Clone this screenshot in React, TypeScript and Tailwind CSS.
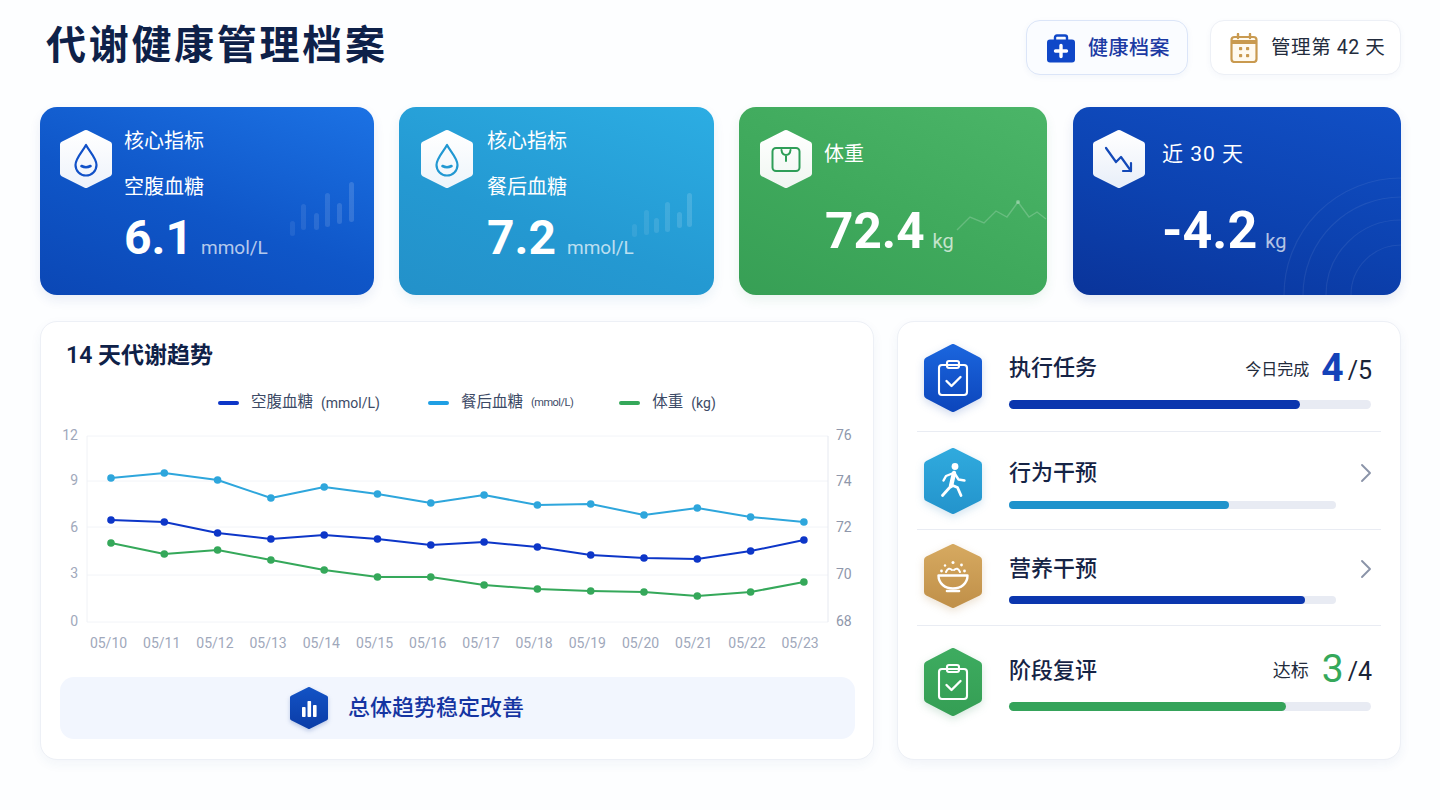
import React from "react";
import { ChevronRight } from "lucide-react";

const Hex = ({ id, from, to, w = 52, h = 58, r = 3, className = "", children }: { id: string; from: string; to: string; w?: number; h?: number; r?: number; className?: string; children?: React.ReactNode }) => {
  const top = h * 0.25;
  const pts = `${w / 2},${r} ${w - r},${top} ${w - r},${h - top} ${w / 2},${h - r} ${r},${h - top} ${r},${top}`;
  return (
    <svg width={w} height={h} viewBox={`0 0 ${w} ${h}`} className={`shrink-0 overflow-visible ${className}`}>
      <defs>
        <linearGradient id={id} x1="0" y1="0" x2="0" y2="1">
          <stop offset="0" stopColor={from} />
          <stop offset="1" stopColor={to} />
        </linearGradient>
      </defs>
      <polygon points={pts} fill={`url(#${id})`} stroke={`url(#${id})`} strokeWidth={r * 2} strokeLinejoin="round" />
      {children}
    </svg>
  );
};

const Drop = ({ color }: { color: string }) => (
  <g fill="none" stroke={color} strokeWidth="2.2" strokeLinecap="round" strokeLinejoin="round">
    <path d="M26 15 C23 21 15.5 28 15.5 35 a10.5 10.5 0 0 0 21 0 C36.5 28 29 21 26 15 Z" />
    <path d="M21.5 36 q4.5 2.4 9 0" strokeWidth="2.6" />
  </g>
);

const Bars = ({ items }: { items: number[][] }) => (
  <svg className="absolute inset-0 h-full w-full" fill="none">
    {items.map(([x, a, b], i) => (
      <rect key={i} x={x} y={a} width="5" height={b - a} rx="2.5" fill="#ffffff" fillOpacity={0.08 + i * 0.012} />
    ))}
  </svg>
);

const xs = Array.from({ length: 14 }, (_, i) => 110 + i * 53.3);
const series = [
  { color: "#2ea6dc", ys: [478, 473, 480, 498, 487, 494, 503, 495, 505, 504, 515, 508, 517, 522] },
  { color: "#0d36c8", ys: [520, 522, 533, 539, 535, 539, 545, 542, 547, 555, 558, 559, 551, 540] },
  { color: "#35a85a", ys: [543, 554, 550, 560, 570, 577, 577, 585, 589, 591, 592, 596, 592, 582] },
];
const dates = ["05/10", "05/11", "05/12", "05/13", "05/14", "05/15", "05/16", "05/17", "05/18", "05/19", "05/20", "05/21", "05/22", "05/23"];
const grid = [436, 481, 527, 575, 622];

const Chart = () => (
  <svg width="832" height="236" viewBox="40 420 832 236" className="block">
    {grid.map((y) => (
      <line key={y} x1="86" x2="827" y1={y} y2={y} stroke="#f2f4f8" strokeWidth="1" />
    ))}
    <line x1="86" x2="86" y1="436" y2="622" stroke="#f0f2f6" />
    <line x1="827" x2="827" y1="436" y2="622" stroke="#e6e9f0" />
    {["12", "9", "6", "3", "0"].map((t, i) => (
      <text key={t} x="77" y={[440, 485, 532, 578, 626][i]} textAnchor="end" fontSize="14" fill="#a0a8bb">{t}</text>
    ))}
    {["76", "74", "72", "70", "68"].map((t, i) => (
      <text key={t} x="835" y={[440, 486, 532, 579, 626][i]} fontSize="14" fill="#8f97ab">{t}</text>
    ))}
    {dates.map((d, i) => (
      <text key={d} x={107.5 + i * 53.2} y="648" textAnchor="middle" fontSize="14" fill="#a0a8bb">{d}</text>
    ))}
    {series.map((s) => (
      <g key={s.color}>
        <polyline points={s.ys.map((y, i) => `${xs[i]},${y}`).join(" ")} fill="none" stroke={s.color} strokeWidth="2" strokeLinejoin="round" />
        {s.ys.map((y, i) => (
          <circle key={i} cx={xs[i]} cy={y} r="3.8" fill={s.color} />
        ))}
      </g>
    ))}
  </svg>
);

const Legend = ({ color, label, unit, unitClass = "text-[14px]" }: { color: string; label: string; unit: string; unitClass?: string }) => (
  <div className="flex items-center">
    <span className={`h-[4px] w-[21px] rounded-full ${color}`} />
    <span className="ml-[12px] text-[15.5px] text-[#3c4a66]">{label}</span>
    <span className={`ml-[8px] text-[#3c4a66] ${unitClass}`}>{unit}</span>
  </div>
);

const Clip = () => (
  <g fill="none" stroke="#fff" strokeWidth="2.1" strokeLinecap="round" strokeLinejoin="round">
    <rect x="15" y="21" width="28" height="30" rx="3" />
    <rect x="23" y="17" width="12" height="7" rx="2" />
    <path d="M22.5 37 l5 5 l9 -9" strokeWidth="2.4" />
  </g>
);

const Walker = () => (
  <g fill="none" stroke="#fff" strokeWidth="2.4" strokeLinecap="round" strokeLinejoin="round">
    <circle cx="31" cy="18.5" r="3.4" fill="#fff" stroke="none" />
    <path d="M30 25 L27 38" strokeWidth="4.4" />
    <path d="M27 38 L18.5 47.5" strokeWidth="2.8" />
    <path d="M27.5 37 L33.5 39.5 L37 47.5" strokeWidth="2.8" />
    <path d="M29.5 25 L22 28 L19.5 32.5" />
    <path d="M31 26 L34.5 31.5 L40.5 32.5" />
  </g>
);

const Bowl = () => (
  <g fill="none" stroke="#fff" strokeWidth="2.4" strokeLinecap="round" strokeLinejoin="round">
    <path d="M14.5 31.5 H43.5 C43.5 39.5 37 44.5 29 44.5 C21 44.5 14.5 39.5 14.5 31.5 Z" />
    <path d="M23 47 H35" strokeWidth="2.6" />
    <path d="M22 28 Q24.5 22.5 28 26 M30 26 Q33.5 22.5 36 28" strokeWidth="2" />
    <circle cx="29" cy="18.5" r="1.5" fill="#fff" stroke="none" />
    <circle cx="17.5" cy="27" r="1.4" fill="#fff" stroke="none" />
    <circle cx="40.5" cy="27" r="1.4" fill="#fff" stroke="none" />
    <circle cx="37.5" cy="21" r="1.4" fill="#fff" stroke="none" />
    <circle cx="21" cy="21.5" r="1.2" fill="#fff" stroke="none" />
  </g>
);

export default function App() {
  return (
    <div className="h-[810px] w-[1440px] overflow-hidden bg-[#fdfeff] pl-[40px] pr-[39px] font-[Roboto,'Noto_Sans_CJK_SC',sans-serif]">
      <header className="flex h-[107px] items-start justify-between pt-[20px]">
        <h1 className="ml-[6px] text-[40px] leading-[52px] font-bold tracking-[2.7px] text-[#0e2149]">代谢健康管理档案</h1>
        <div className="flex gap-[22px]">
          <div className="flex h-[55px] w-[162px] items-center rounded-[14px] border border-[#dbe5f8] bg-[#fafcff] pl-[19px] shadow-[0_2px_6px_rgba(40,80,160,0.05)]">
            <svg width="30" height="30" viewBox="0 0 30 30" className="shrink-0">
              <path d="M9 7 V4.5 Q9 2.5 11 2.5 H19 Q21 2.5 21 4.5 V7" fill="none" stroke="#0f47c8" strokeWidth="2.4" />
              <rect x="1" y="6.5" width="28" height="23" rx="3" fill="#0f47c8" />
              <path d="M15 12.5 V23.5 M9.5 18 H20.5" stroke="#fff" strokeWidth="3.4" strokeLinecap="round" />
            </svg>
            <span className="ml-[12px] text-[20px] font-medium tracking-[0.5px] text-[#1c3aa3]">健康档案</span>
          </div>
          <div className="flex h-[55px] w-[191px] items-center rounded-[14px] border border-[#edf0f6] bg-white pl-[19px] shadow-[0_2px_6px_rgba(40,80,160,0.04)]">
            <svg width="28" height="30" viewBox="0 0 28 30" className="shrink-0">
              <rect x="1.5" y="4" width="25" height="25" rx="3" fill="#fffaf0" stroke="#c99a50" strokeWidth="2.2" />
              <path d="M1.5 9 H26.5" stroke="#c99a50" strokeWidth="4" />
              <path d="M8 1 V5 M20 1 V5" stroke="#c99a50" strokeWidth="2.4" strokeLinecap="round" />
              <g fill="#c99a50">
                <rect x="9" y="14" width="3.2" height="3.2" rx="0.8" />
                <rect x="16" y="14" width="3.2" height="3.2" rx="0.8" />
                <rect x="9" y="21" width="3.2" height="3.2" rx="0.8" />
                <rect x="16" y="21" width="3.2" height="3.2" rx="0.8" />
              </g>
            </svg>
            <span className="ml-[13px] whitespace-pre text-[19.5px] tracking-[0.6px] text-[#232c3d]">管理第 42 天</span>
          </div>
        </div>
      </header>

      <section className="flex h-[188px]">
        <article className="relative flex w-[334px] gap-[12px] overflow-hidden rounded-[17px] bg-[linear-gradient(200deg,#1c72e4_0%,#0f56c8_55%,#0b47b5_100%)] pl-[20px] pt-[23px] shadow-[0_5px_12px_rgba(30,70,150,0.09)]">
          <Bars items={[[250, 114, 129], [261, 97, 123], [274, 106, 123], [285, 86, 120], [297, 96, 117], [309, 75, 115]]} />
          <Hex id="h1" from="#ffffff" to="#eef3fb"><Drop color="#1151c8" /></Hex>
          <div className="relative text-white">
            <div className="mt-[-3px] text-[20px] leading-[28px]">核心指标</div>
            <div className="mt-[18px] text-[20px] leading-[28px]">空腹血糖</div>
            <div className="mt-[7px] flex items-baseline leading-[60px]">
              <span className="text-[48px] font-bold">6.1</span>
              <span className="ml-[8px] text-[19px] font-normal text-white/70">mmol/L</span>
            </div>
          </div>
        </article>

        <article className="relative ml-[25px] flex w-[315px] gap-[14px] overflow-hidden rounded-[17px] bg-[linear-gradient(200deg,#2cade3_0%,#2499d2_60%,#2391c9_100%)] pl-[22px] pt-[23px] shadow-[0_5px_12px_rgba(30,110,170,0.09)]">
          <Bars items={[[233, 117, 130], [245, 103, 128], [255, 111, 126], [266, 95, 125], [278, 105, 121], [288, 86, 120]]} />
          <Hex id="h2" from="#ffffff" to="#eef5fb"><Drop color="#2198d2" /></Hex>
          <div className="relative text-white">
            <div className="mt-[-3px] text-[20px] leading-[28px]">核心指标</div>
            <div className="mt-[18px] text-[20px] leading-[28px]">餐后血糖</div>
            <div className="mt-[7px] flex items-baseline leading-[60px]">
              <span className="text-[48px] font-bold">7.2</span>
              <span className="ml-[11px] text-[19px] font-normal text-white/70">mmol/L</span>
            </div>
          </div>
        </article>

        <article className="relative ml-[25px] flex w-[308px] gap-[12px] overflow-hidden rounded-[17px] bg-[linear-gradient(205deg,#4bb568_0%,#3fa95c_55%,#379f55_100%)] pl-[21px] pt-[23px] shadow-[0_5px_12px_rgba(40,130,80,0.09)]">
          <svg className="absolute inset-0 h-full w-full" fill="none">
            <polyline points="218,123 231,110 245,116 257,104 268,110 279,95 290,110 298,105 307,112" stroke="#ffffff" strokeOpacity="0.2" strokeWidth="1.4" />
            <circle cx="279" cy="95" r="2" fill="#ffffff" fillOpacity="0.3" />
          </svg>
          <Hex id="h3" from="#ffffff" to="#f0f6f1">
            <g fill="none" stroke="#2f9e58" strokeWidth="2" strokeLinecap="round" strokeLinejoin="round">
              <rect x="12.5" y="18" width="27" height="23" rx="3.5" />
              <path d="M26 31 V25 M21.5 20 Q22 25 26 25 Q30 25 30.5 20" />
            </g>
          </Hex>
          <div className="relative text-white">
            <div className="mt-[10px] text-[20px] leading-[28px]">体重</div>
            <div className="ml-[1px] mt-[33px] flex items-baseline leading-[60px]">
              <span className="text-[49.5px] font-bold">72.4</span>
              <span className="ml-[8px] text-[20px] font-normal text-white/70">kg</span>
            </div>
          </div>
        </article>

        <article className="relative ml-[26px] flex w-[328px] gap-[17px] overflow-hidden rounded-[17px] bg-[linear-gradient(195deg,#1150c6_0%,#0c42b0_55%,#0a349a_100%)] pl-[20px] pt-[23px] shadow-[0_5px_12px_rgba(20,50,140,0.1)]">
          <svg className="absolute inset-0 h-full w-full" fill="none" stroke="#ffffff" strokeOpacity="0.07" strokeWidth="1.2">
            <circle cx="328" cy="188" r="117" />
            <circle cx="328" cy="188" r="98" />
            <circle cx="328" cy="188" r="75" />
            <circle cx="328" cy="188" r="50" />
          </svg>
          <Hex id="h4" from="#ffffff" to="#e9eff9">
            <g fill="none" stroke="#1349b8" strokeWidth="2.2" strokeLinecap="round" strokeLinejoin="round">
              <path d="M13 18 L23 32 L28 27 L38 41" />
              <path d="M38 33 V41 H30" />
            </g>
          </Hex>
          <div className="relative text-white">
            <div className="mt-[10px] whitespace-pre text-[21px] leading-[28px] tracking-[1px]">近 30 天</div>
            <div className="mt-[33px] flex items-baseline leading-[60px]">
              <span className="text-[52px] font-bold">-4.2</span>
              <span className="ml-[8px] text-[20px] font-normal text-white/70">kg</span>
            </div>
          </div>
        </article>
      </section>

      <section className="mt-[26px] flex h-[439px] gap-[23px]">
        <article className="w-[834px] rounded-[17px] border border-[#edf0f6] bg-white shadow-[0_4px_12px_rgba(40,70,140,0.05)]">
          <h2 className="ml-[25px] mt-[18px] whitespace-pre text-[23px] leading-[32px] font-semibold text-[#0f2148]">14 天代谢趋势</h2>
          <div className="mt-[17px] flex h-[28px] items-center pl-[177px]">
            <Legend color="bg-[#0d36c8]" label="空腹血糖" unit="(mmol/L)" />
            <div className="w-[48px]" />
            <Legend color="bg-[#1f9fe4]" label="餐后血糖" unit="(mmol/L)" unitClass="text-[11px] tracking-[-0.5px]" />
            <div className="w-[46px]" />
            <Legend color="bg-[#35a85a]" label="体重" unit="(kg)" />
          </div>
          <div className="mt-[3px]">
            <Chart />
          </div>
          <div className="ml-[19px] mt-[21px] flex h-[62px] w-[795px] items-center rounded-[14px] bg-[#f2f6fe] pl-[230px]">
            <Hex id="h5" from="#1252c4" to="#0b3da8" w={38} h={42} r={2} className="drop-shadow-[0_2px_2px_rgba(20,60,150,0.25)]">
              <g fill="#fff">
                <rect x="12" y="20" width="3.6" height="10" rx="0.8" />
                <rect x="17.5" y="14" width="3.6" height="16" rx="0.8" />
                <rect x="23" y="18" width="3.6" height="12" rx="0.8" />
              </g>
            </Hex>
            <span className="ml-[20px] mt-[-2px] text-[22px] font-medium text-[#1535a2]">总体趋势稳定改善</span>
          </div>
        </article>

        <article className="w-[504px] rounded-[17px] border border-[#edf0f6] bg-white px-[19px] shadow-[0_4px_12px_rgba(40,70,140,0.06)]">
          <div className="flex h-[110px] border-b border-[#e9ecf3]">
            <Hex id="r1" from="#1a64dc" to="#0d47bd" w={58} h={68} r={4} className="ml-[7px] mt-[22px] drop-shadow-[0_3px_4px_rgba(20,70,170,0.2)]"><Clip /></Hex>
            <div className="ml-[27px] mt-[25px] flex-1 pr-[9px]">
              <div className="flex h-[40px] items-center justify-between">
                <span className="text-[22px] font-medium text-[#152345]">执行任务</span>
                <div className="flex items-center">
                  <span className="mt-[6px] text-[16px] text-[#232c3d]">今日完成</span>
                  <span className="ml-[12px] mt-[2px] text-[39px] leading-[40px] font-bold text-[#1442b8]">4</span>
                  <span className="ml-[4px] mt-[8px] text-[25px] leading-[32px] text-[#1a2438]">/5</span>
                </div>
              </div>
              <div className="mt-[13px] h-[9px] w-[362px] rounded-full bg-[#e8ebf3]">
                <div className="h-full w-[291px] rounded-full bg-[#0b36ae]" />
              </div>
            </div>
          </div>

          <div className="flex h-[98px] border-b border-[#e9ecf3]">
            <Hex id="r2" from="#2fa9dd" to="#2495cd" w={58} h={66} r={4} className="ml-[7px] mt-[16px] drop-shadow-[0_3px_4px_rgba(30,120,180,0.2)]"><Walker /></Hex>
            <div className="ml-[27px] mt-[20px] flex-1 pr-[9px]">
              <div className="flex h-[40px] items-center justify-between">
                <span className="text-[22px] font-medium text-[#152345]">行为干预</span>
                <ChevronRight className="mr-[-10px] mt-[2px] h-[32px] w-[32px] text-[#8a93a8]" strokeWidth={1.4} />
              </div>
              <div className="mt-[9px] h-[8px] w-[327px] rounded-full bg-[#e8ebf3]">
                <div className="h-full w-[220px] rounded-full bg-[#1f93cc]" />
              </div>
            </div>
          </div>

          <div className="flex h-[96px] border-b border-[#e9ecf3]">
            <Hex id="r3" from="#d5a85f" to="#c1914a" w={58} h={64} r={4} className="ml-[7px] mt-[14px] drop-shadow-[0_3px_4px_rgba(170,120,50,0.22)]"><Bowl /></Hex>
            <div className="ml-[27px] mt-[18px] flex-1 pr-[9px]">
              <div className="flex h-[40px] items-center justify-between">
                <span className="text-[22px] font-medium text-[#152345]">营养干预</span>
                <ChevronRight className="mr-[-10px] mt-[2px] h-[32px] w-[32px] text-[#8a93a8]" strokeWidth={1.4} />
              </div>
              <div className="mt-[8px] h-[8px] w-[327px] rounded-full bg-[#e8ebf3]">
                <div className="h-full w-[296px] rounded-full bg-[#0b36ae]" />
              </div>
            </div>
          </div>

          <div className="flex h-[132px]">
            <Hex id="r4" from="#3dab5f" to="#359f55" w={58} h={68} r={4} className="ml-[7px] mt-[22px] drop-shadow-[0_3px_4px_rgba(40,130,80,0.2)]"><Clip /></Hex>
            <div className="ml-[27px] mt-[24px] flex-1 pr-[9px]">
              <div className="flex h-[40px] items-center justify-between">
                <span className="text-[22px] font-medium text-[#152345]">阶段复评</span>
                <div className="flex items-center">
                  <span className="mt-[1px] text-[18px] text-[#232c3d]">达标</span>
                  <span className="ml-[13px] mt-[-2px] text-[39px] leading-[40px] text-[#35a85a]">3</span>
                  <span className="ml-[4px] mt-[4px] text-[25px] leading-[32px] text-[#1a2438]">/4</span>
                </div>
              </div>
              <div className="mt-[12px] h-[9px] w-[362px] rounded-full bg-[#e8ebf3]">
                <div className="h-full w-[277px] rounded-full bg-[#35a35a]" />
              </div>
            </div>
          </div>
        </article>
      </section>
    </div>
  );
}
